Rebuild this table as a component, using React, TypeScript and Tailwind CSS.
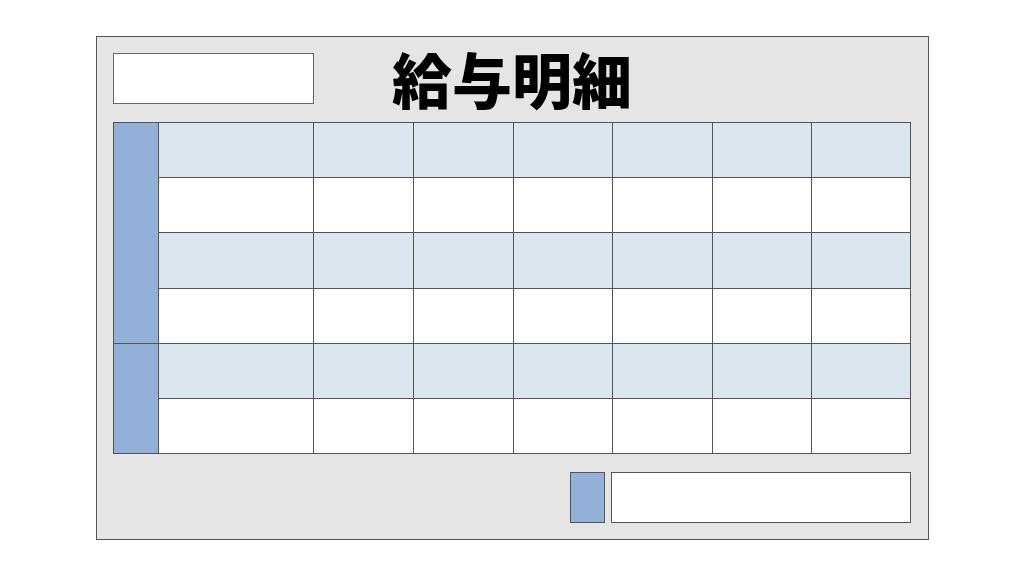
import React from "react";

const ROWS = 6;
const DATA_COLS = 7;

export default function App() {
  const cells: React.ReactNode[] = [];
  for (let r = 0; r < ROWS; r++) {
    if (r === 0) {
      cells.push(
        <div key="b1" className="row-span-4 bg-[#93b1d8] border-r border-b border-[#555]" />
      );
    }
    if (r === 4) {
      cells.push(
        <div key="b2" className="row-span-2 bg-[#93b1d8] border-r border-b border-[#555]" />
      );
    }
    for (let c = 0; c < DATA_COLS; c++) {
      cells.push(
        <div
          key={`${r}-${c}`}
          className={`border-r border-b border-[#555] ${r % 2 === 0 ? "bg-[#dce6f0]" : "bg-white"}`}
        />
      );
    }
  }

  return (
    <div className="w-[1024px] h-[576px] bg-white pt-[36px] pl-[96px]" style={{ fontFamily: '"Noto Sans CJK JP", "Noto Sans", sans-serif' }}>
      <div className="w-[833px] h-[504px] border border-[#555] bg-[#e5e5e5] pt-[16px] pl-[16px] pr-[17px] flex flex-col">
        <div className="grid grid-cols-[1fr_auto_1fr] grid-rows-[51px] items-start h-[51px]">
          <div className="w-[201px] h-[51px] bg-white border border-[#666] justify-self-start" />
          <div className="text-[60px] font-black text-black leading-none -mt-[5px]">給与明細</div>
          <div />
        </div>
        <div className="mt-[18px] grid grid-cols-[45px_155px_100px_100px_99px_100px_99px_99px] grid-rows-[55px_55px_56px_55px_55px_55px] border-l border-t border-[#555] w-[798px]">
          {cells}
        </div>
        <div className="mt-[18px] flex justify-end gap-[6px] w-[798px]">
          <div className="w-[35px] h-[51px] bg-[#93b1d8] border border-[#555]" />
          <div className="w-[300px] h-[51px] bg-white border border-[#555]" />
        </div>
      </div>
    </div>
  );
}
